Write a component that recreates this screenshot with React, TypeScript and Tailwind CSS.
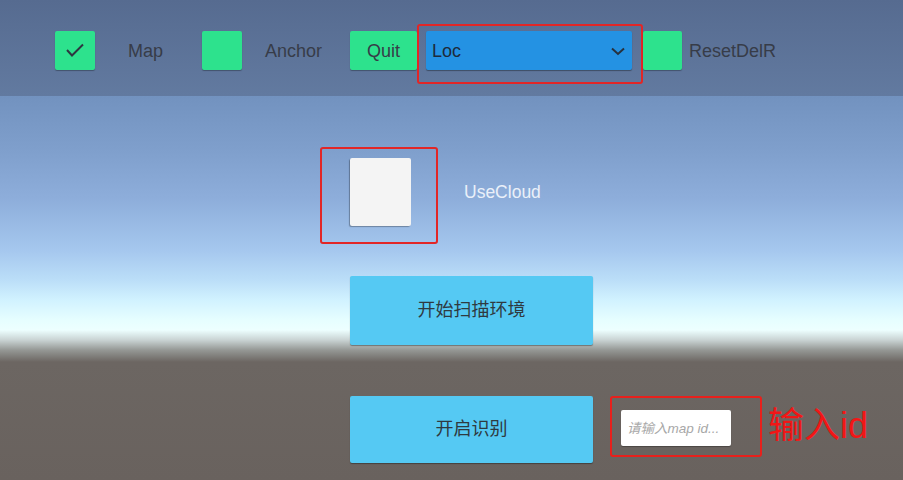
import { useState } from 'react';

const font = "font-['Liberation_Sans','Noto_Sans_CJK_SC',sans-serif]";

export default function App() {
  const [mapOn, setMapOn] = useState(true);
  const [anchorOn, setAnchorOn] = useState(false);
  const [cloudOn, setCloudOn] = useState(false);

  return (
    <div className={`flex h-[480px] w-[903px] flex-col overflow-hidden ${font}`}>
      {/* top toolbar */}
      <div className="flex h-[96px] shrink-0 items-start bg-[linear-gradient(to_bottom,#566b90,#627aa0)] pl-[55px] pt-[24px] text-[18px] text-[#373c48]">
        <GreenToggle checked={mapOn} onClick={() => setMapOn(!mapOn)} />
        <div className="mt-[8px] flex h-[39px] w-[107px] items-center pl-[33px]">Map</div>
        <GreenToggle checked={anchorOn} onClick={() => setAnchorOn(!anchorOn)} />
        <div className="mt-[8px] flex h-[39px] w-[108px] items-center pl-[23px]">Anchor</div>
        <button className="mt-[7px] flex h-[39px] w-[67px] items-center justify-center rounded-[2px] bg-[#2de28d] pt-px shadow-[0_1px_1px_rgba(0,0,0,0.3)]">
          Quit
        </button>
        <div className="flex h-[60px] w-[226px] rounded-[3px] border-2 border-[#e22626] pl-[7px] pt-[5px]">
          <div className="flex h-[39px] w-[206px] items-center justify-between rounded-[2px] bg-[#2492e3] pl-[6px] pr-[6px] pt-px text-[#1d2a3b] shadow-[0_1px_1px_rgba(0,0,0,0.35)]">
            <span>Loc</span>
            <svg width="16" height="10" viewBox="0 0 16 10">
              <polyline points="2,2.5 8,8 14,2.5" fill="none" stroke="#27323f" strokeWidth="2" />
            </svg>
          </div>
        </div>
        <div className="mt-[7px] h-[39px] w-[39px] rounded-[2px] bg-[#2de28d] shadow-[0_1px_1px_rgba(0,0,0,0.3)]" />
        <div className="mt-[8px] flex h-[39px] items-center pl-[7px]">ResetDelR</div>
      </div>

      {/* scene */}
      <div className="flex flex-1 flex-col bg-[linear-gradient(to_bottom,#7292bf_0px,#7f9fcc_54px,#8eaedb_104px,#a5c7ee_154px,#bbdef8_184px,#d1f2ff_204px,#e6feff_224px,#edffff_234px,#c9d3d3_244px,#959895_254px,#6c6662_266px,#69625e_384px)] pl-[320px]">
        <div className="mt-[51px] flex items-center">
          <div className="flex h-[97px] w-[118px] items-start rounded-[3px] border-2 border-[#e22626] pl-[28px] pt-[9px]">
            <button
              onClick={() => setCloudOn(!cloudOn)}
              className="h-[68px] w-[61px] rounded-[2px] bg-[#f4f4f4] shadow-[-1px_1px_1px_rgba(0,0,0,0.3)]"
            />
          </div>
          <span className="mb-[7px] ml-[26px] text-[17.5px] text-[#eaf0f9]">UseCloud</span>
        </div>

        <button className="ml-[30px] mt-[32px] flex h-[69px] w-[243px] items-center justify-center rounded-[2px] bg-[#55c9f3] text-[18px] text-[#2f3a40] shadow-[0_1px_1px_rgba(0,0,0,0.35)]">
          开始扫描环境
        </button>

        <div className="ml-[30px] mt-[51px] flex items-start">
          <button className="flex h-[67px] w-[243px] items-center justify-center rounded-[2px] bg-[#55c9f3] text-[18px] text-[#2f3a40] shadow-[0_1px_1px_rgba(0,0,0,0.35)]">
            开启识别
          </button>
          <div className="ml-[17px] flex h-[61px] w-[152px] items-start rounded-[3px] border-2 border-[#e8201c] pl-[9px] pt-[12px]">
            <input
              placeholder="请输入map id..."
              className="h-[36px] w-[110px] rounded-[2px] bg-white px-[6px] text-[13.5px] italic text-[#555] shadow-[0_1px_1px_rgba(0,0,0,0.3)] outline-none placeholder:text-[#a8a8a8]"
            />
          </div>
          <span className="ml-[6px] mt-[8px] text-[36px] leading-[44px] text-[#f21616]">输入id</span>
        </div>
      </div>
    </div>
  );
}

function GreenToggle({ checked, onClick }: { checked: boolean; onClick: () => void }) {
  return (
    <button
      onClick={onClick}
      className="mt-[7px] flex h-[39px] w-[40px] items-center justify-center rounded-[2px] bg-[#2de28d] shadow-[0_1px_1px_rgba(0,0,0,0.3)]"
    >
      {checked && (
        <svg width="20" height="15" viewBox="0 0 20 15">
          <polyline points="2,7 7,12.5 18,1.5" fill="none" stroke="#2e3640" strokeWidth="2" />
        </svg>
      )}
    </button>
  );
}
